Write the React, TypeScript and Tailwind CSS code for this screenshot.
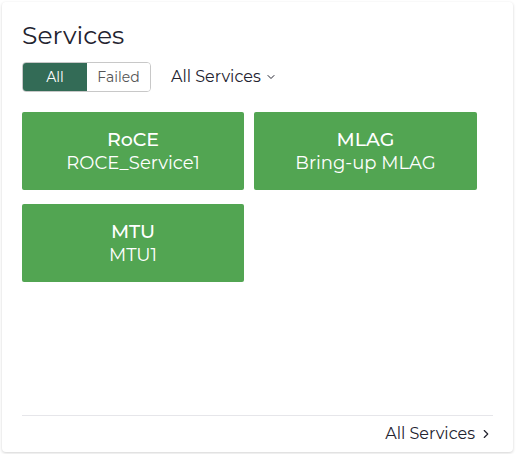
import React, { useState } from 'react';
import { ChevronDown, ChevronRight } from 'lucide-react';

const services = [
  { name: 'RoCE', instance: 'ROCE_Service1' },
  { name: 'MLAG', instance: 'Bring-up MLAG' },
  { name: 'MTU', instance: 'MTU1' },
];

const App: React.FC = () => {
  const [filter, setFilter] = useState<'all' | 'failed'>('all');

  return (
    <div className="w-[517px] h-[454px] bg-white p-[2px] pr-[4px] font-['Montserrat','Open_Sans',sans-serif] text-[#23232f]">
      <div className="flex h-[450px] flex-col rounded-[4px] bg-white px-5 pt-[17px] pb-[6px] shadow-[0_1px_3px_rgba(0,0,0,0.18)]">
        <h2 className="text-[25px] leading-8 font-normal">Services</h2>

        <div className="mt-[11px] flex items-center">
          <div className="flex h-[30px] overflow-hidden rounded-[4px] border border-[#c8c8c8] text-[14px]">
            <button
              onClick={() => setFilter('all')}
              className={`w-[64px] ${filter === 'all' ? 'bg-[#336b56] text-white' : 'bg-white text-[#555]'}`}
            >
              All
            </button>
            <button
              onClick={() => setFilter('failed')}
              className={`w-[63px] ${filter === 'failed' ? 'bg-[#336b56] text-white' : 'bg-white text-[#555]'}`}
            >
              Failed
            </button>
          </div>
          <button className="ml-[20px] flex items-center gap-[4px] text-[16px]">
            All Services <ChevronDown size={12} strokeWidth={2} />
          </button>
        </div>

        <div className="mt-[20px] grid grid-cols-[222px_223px] gap-x-[10px] gap-y-[14px]">
          {services.map((s) => (
            <div
              key={s.name}
              className="flex h-[78px] flex-col items-center justify-center rounded-[2px] bg-[#52a552] text-white"
            >
              <div className="text-[19px] leading-6 font-medium">{s.name}</div>
              <div className="text-[18px] leading-[22px]">{s.instance}</div>
            </div>
          ))}
        </div>

        <div className="mt-auto border-t border-[#e6e6ea] pt-[6px] flex justify-end items-center text-[16px] pr-0">
          All Services <ChevronRight size={14} strokeWidth={2} className="ml-[4px]" />
        </div>
      </div>
    </div>
  );
};

export default App;
